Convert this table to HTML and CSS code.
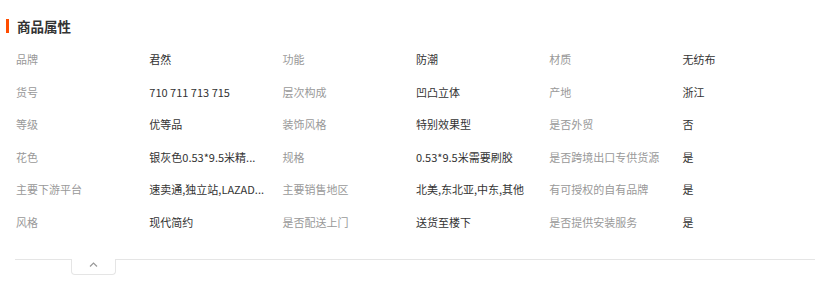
FILE: index.html
```html
<!DOCTYPE html>
<html lang="zh">
<head>
<meta charset="utf-8">
<link rel="stylesheet" href="styles.css">
</head>
<body>
<section class="attrs">
  <h3 class="title">商品属性</h3>
  <div class="grid">
    <div class="label">品牌</div><div class="value">君然</div>
    <div class="label">功能</div><div class="value">防潮</div>
    <div class="label">材质</div><div class="value">无纺布</div>

    <div class="label">货号</div><div class="value">710 711 713 715</div>
    <div class="label">层次构成</div><div class="value">凹凸立体</div>
    <div class="label">产地</div><div class="value">浙江</div>

    <div class="label">等级</div><div class="value">优等品</div>
    <div class="label">装饰风格</div><div class="value">特别效果型</div>
    <div class="label">是否外贸</div><div class="value">否</div>

    <div class="label">花色</div><div class="value" title="银灰色0.53*9.5米精致防潮款">银灰色0.53*9.5米精...</div>
    <div class="label">规格</div><div class="value">0.53*9.5米需要刷胶</div>
    <div class="label">是否跨境出口专供货源</div><div class="value">是</div>

    <div class="label">主要下游平台</div><div class="value" title="速卖通,独立站,LAZADA,亚马逊">速卖通,独立站,LAZAD...</div>
    <div class="label">主要销售地区</div><div class="value">北美,东北亚,中东,其他</div>
    <div class="label">有可授权的自有品牌</div><div class="value">是</div>

    <div class="label">风格</div><div class="value">现代简约</div>
    <div class="label">是否配送上门</div><div class="value">送货至楼下</div>
    <div class="label">是否提供安装服务</div><div class="value">是</div>
  </div>
  <div class="footer">
    <button class="toggle" type="button" aria-label="收起">
      <svg width="9" height="5" viewBox="0 0 9 5"><path d="M1 4.5 L4.5 1 L8 4.5" fill="none" stroke="#999" stroke-width="1.2"/></svg>
    </button>
  </div>
</section>
</body>
</html>
```
FILE: styles.css
```css
* { box-sizing: border-box; }
html, body { margin: 0; background: #fff; }
body {
  font-family: "Noto Sans CJK SC", "Noto Sans", sans-serif;
  font-size: 11px;
  color: #333;
}
.attrs {
  padding: 19px 8px 0 15px;
  width: 822px;
}
.title {
  margin: 0 0 0 -9px;
  padding-left: 8px;
  border-left: 3px solid #ff4d00;
  font-size: 13.5px;
  font-weight: bold;
  line-height: 17px;
  height: 14px;
  display: flex;
  align-items: center;
  color: #333;
}
.grid {
  margin-top: 10px;
  display: grid;
  grid-template-columns: repeat(6, 133.3px);
  grid-auto-rows: 32.5px;
  align-items: center;
}
.label, .value {
  padding-left: 1px;
  white-space: nowrap;
  line-height: 16px;
}
.label { color: #999; }
.value { color: #333; }
.footer {
  margin-top: 21px;
  width: 800px;
  border-top: 1px solid #e5e5e5;
}
.toggle {
  display: flex;
  align-items: flex-start;
  justify-content: center;
  margin: -1px 0 0 56px;
  width: 45px;
  height: 16px;
  padding: 3px 0 0;
  background: #fff;
  border: 1px solid #e5e5e5;
  border-top: none;
  border-radius: 0 0 4px 4px;
  cursor: pointer;
}
.toggle svg { display: block; }
```
